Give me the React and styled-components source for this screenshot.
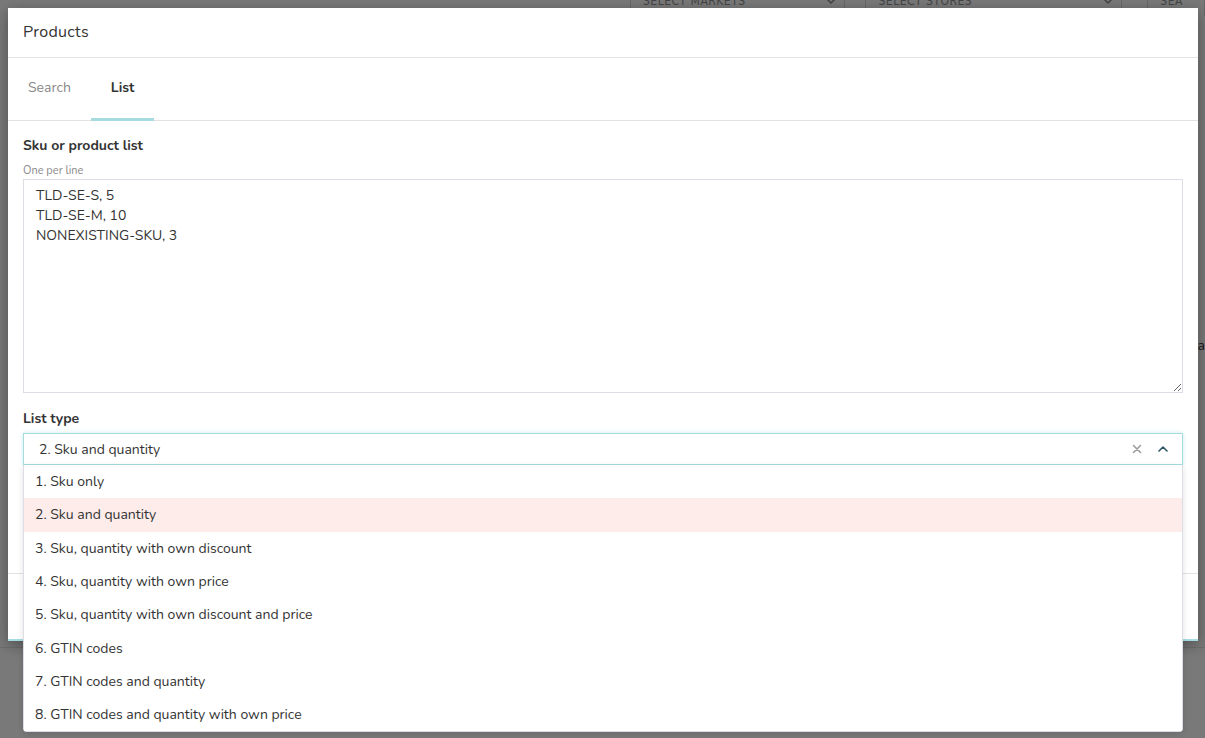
import React from "react";
import styled, { createGlobalStyle } from "styled-components";

const Global = createGlobalStyle`
  html, body { margin: 0; padding: 0; }
  body {
    width: 1205px; height: 738px; overflow: hidden;
    background: #f2f3f5;
    font-family: "Nunito", Lato, "Open Sans", sans-serif;
  }
  * { box-sizing: border-box; }
`;

const Page = styled.div`
  width: 1205px;
  height: 738px;
  position: relative;
  overflow: hidden;
  display: flow-root;
  background: #f2f3f5;
`;

const BgBar = styled.div`
  display: flex;
  align-items: center;
  height: 30px;
  margin-top: -14px;
  padding-left: 630px;
`;

const BgSelect = styled.div`
  display: flex;
  align-items: center;
  justify-content: space-between;
  width: ${(p) => p.$w}px;
  height: 30px;
  border-left: 1px solid #cfcfcf;
  border-right: 1px solid #cfcfcf;
  margin-right: ${(p) => p.$gap}px;
  padding: 0 8px 0 12px;
  font-family: "DejaVu Sans Condensed", "Liberation Sans", sans-serif;
  font-size: 12px;
  letter-spacing: 0.5px;
  color: #8a8a8a;
`;

const BgContent = styled.div`
  display: flex;
  justify-content: flex-end;
  padding-top: 320px;
  font-size: 14px;
  color: #333;
`;

const BgLine = styled.div`
  margin-top: 292px;
  border-top: 1px solid #ddd;
`;

const Overlay = styled.div`
  position: absolute;
  inset: 0;
  background: rgba(0, 0, 0, 0.5);
`;

const Modal = styled.div`
  position: absolute;
  left: 8px;
  top: 8px;
  width: 1190px;
  height: 633px;
  background: #fff;
  border-bottom: 2px solid #a6dcdf;
  box-shadow: 0 4px 14px rgba(0, 0, 0, 0.35);
  display: flex;
  flex-direction: column;
`;

const Header = styled.div`
  height: 50px;
  display: flex;
  align-items: center;
  padding: 0 15px 2px;
  border-bottom: 1px solid #e2e2e2;
  font-size: 16px;
  color: #333;
  letter-spacing: 0.3px;
`;

const Tabs = styled.div`
  height: 63px;
  display: flex;
  border-bottom: 1px solid #e2e2e2;
`;

const Tab = styled.div`
  display: flex;
  align-items: center;
  padding: 0 20px 2px;
  font-size: 14px;
  color: ${(p) => (p.$active ? "#333" : "#888")};
  font-weight: ${(p) => (p.$active ? 700 : 400)};
  border-bottom: 3px solid ${(p) => (p.$active ? "#a6dcdf" : "transparent")};
  margin-bottom: -1px;
`;

const Body = styled.div`
  flex: 1;
  padding: 17px 15px 0;
  display: flex;
  flex-direction: column;
`;

const Label = styled.div`
  font-size: 14px;
  font-weight: 700;
  color: #333;
  line-height: 16px;
`;

const Hint = styled.div`
  font-size: 11px;
  color: #888;
  margin-top: 10px;
  line-height: 14px;
`;

const TextArea = styled.textarea`
  margin-top: 1px;
  width: 100%;
  height: 214px;
  border: 1px solid #dcdde5;
  border-radius: 0;
  padding: 6px 12px;
  font-family: "Nunito", Lato, "Open Sans", sans-serif;
  font-size: 14px;
  line-height: 20px;
  color: #333;
  resize: vertical;
  outline: none;
`;

const Field = styled.div`
  margin-top: 18px;
  display: flex;
  flex-direction: column;
`;

const SelectWrap = styled.div`
  position: relative;
  margin-top: 6px;
`;

const Control = styled.div`
  height: 32px;
  display: flex;
  align-items: center;
  border: 1px solid #a6dcdf;
  box-shadow: 0 0 4px rgba(166, 220, 223, 0.6);
  padding: 0 6px 0 15px;
  font-size: 14px;
  color: #333;
`;

const Value = styled.div`
  flex: 1;
`;

const IconBtn = styled.div`
  width: 26px;
  display: flex;
  align-items: center;
  justify-content: center;
  color: ${(p) => p.$color};
`;

const Menu = styled.div`
  position: absolute;
  left: 0;
  right: 0;
  top: 32px;
  background: #fff;
  border: 1px solid #dcdde5;
  border-top: none;
  border-radius: 0 0 4px 4px;
  box-shadow: 0 2px 6px rgba(0, 0, 0, 0.12);
  z-index: 5;
`;

const Option = styled.div`
  height: 33.3px;
  display: flex;
  align-items: center;
  padding-left: 11px;
  font-size: 14px;
  color: #333;
  background: ${(p) => (p.$selected ? "#fdecea" : "#fff")};
`;

const Footer = styled.div`
  height: 66px;
  border-top: 1px solid #e2e2e2;
`;

const options = [
  "1. Sku only",
  "2. Sku and quantity",
  "3. Sku, quantity with own discount",
  "4. Sku, quantity with own price",
  "5. Sku, quantity with own discount and price",
  "6. GTIN codes",
  "7. GTIN codes and quantity",
  "8. GTIN codes and quantity with own price",
];

const Chevron = ({ up }) => (
  <svg width="10" height="10" viewBox="0 0 10 10" fill="none">
    <path
      d={up ? "M1 7 L5 3 L9 7" : "M1 3 L5 7 L9 3"}
      stroke="currentColor"
      strokeWidth="1.6"
      strokeLinecap="round"
      strokeLinejoin="round"
    />
  </svg>
);

const Cross = () => (
  <svg width="10" height="10" viewBox="0 0 10 10" fill="none">
    <path d="M1.5 1.5 L8.5 8.5 M8.5 1.5 L1.5 8.5" stroke="currentColor" strokeWidth="1.5" strokeLinecap="round" />
  </svg>
);

export default function App() {
  return (
    <Page>
      <Global />
      <BgBar>
        <BgSelect $w={228} $gap={20}>
          <span>SELECT MARKETS</span>
          <Chevron />
        </BgSelect>
        <BgSelect $w={272} $gap={25}>
          <span>SELECT STORES</span>
          <Chevron />
        </BgSelect>
        <BgSelect $w={60} $gap={0}>
          <span>SEA</span>
        </BgSelect>
      </BgBar>
      <BgContent>la</BgContent>
      <BgLine />
      <Overlay />
      <Modal>
        <Header>Products</Header>
        <Tabs>
          <Tab>Search</Tab>
          <Tab $active>List</Tab>
        </Tabs>
        <Body>
          <Label>Sku or product list</Label>
          <Hint>One per line</Hint>
          <TextArea
            defaultValue={"TLD-SE-S, 5\nTLD-SE-M, 10\nNONEXISTING-SKU, 3"}
            spellCheck={false}
          />
          <Field>
            <Label>List type</Label>
            <SelectWrap>
              <Control>
                <Value>2. Sku and quantity</Value>
                <IconBtn $color="#999">
                  <Cross />
                </IconBtn>
                <IconBtn $color="#2b5566">
                  <Chevron up />
                </IconBtn>
              </Control>
              <Menu>
                {options.map((o, i) => (
                  <Option key={o} $selected={i === 1}>
                    {o}
                  </Option>
                ))}
              </Menu>
            </SelectWrap>
          </Field>
        </Body>
        <Footer />
      </Modal>
    </Page>
  );
}
